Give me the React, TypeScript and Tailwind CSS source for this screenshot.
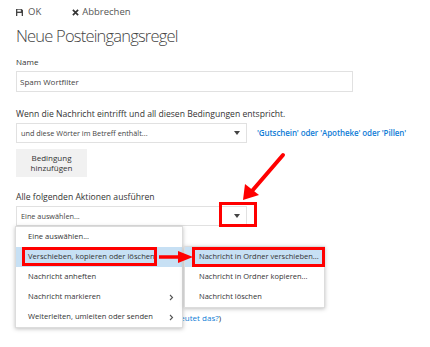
import React from 'react';

const Caret = () => (
  <svg width="6" height="4" viewBox="0 0 6 4" className="fill-[#444]">
    <path d="M0 0h6L3 4z" />
  </svg>
);

const Chevron = () => (
  <svg width="5" height="7" viewBox="0 0 5 7" className="stroke-[#555] fill-none">
    <path d="M1 1l2.5 2.5L1 6" strokeWidth="1.1" />
  </svg>
);

const menuItems = [
  { label: 'Eine auswählen...', sub: false },
  { label: 'Verschieben, kopieren oder löschen', sub: false, active: true },
  { label: 'Nachricht anheften', sub: false },
  { label: 'Nachricht markieren', sub: true },
  { label: 'Weiterleiten, umleiten oder senden', sub: true },
];

const subItems = [
  { label: 'Nachricht in Ordner verschieben...', active: true },
  { label: 'Nachricht in Ordner kopieren...' },
  { label: 'Nachricht löschen' },
];

export default function App() {
  return (
    <div className="relative w-[430px] h-[347px] overflow-hidden bg-white font-['Open_Sans',sans-serif] text-[#333]">
      <div className="pl-4">
        {/* Toolbar */}
        <div className="flex items-center h-[24px] text-[9.5px] text-[#555]">
          <span className="flex items-center gap-[5px]">
            <svg width="7" height="7" viewBox="0 0 8 8" className="fill-[#444]">
              <path d="M0 0h6.5L8 1.5V8H0z" />
              <rect x="1.5" y="0.8" width="4" height="2.2" className="fill-white" />
              <rect x="1.5" y="4.6" width="5" height="3.4" className="fill-white" />
            </svg>
            OK
          </span>
          <span className="flex items-center gap-[3px] ml-[31px]">
            <svg width="7" height="7" viewBox="0 0 8 8" className="stroke-[#333]">
              <path d="M1 1l6 6M7 1L1 7" strokeWidth="1.9" />
            </svg>
            Abbrechen
          </span>
        </div>

        {/* Title */}
        <h1 className="text-[16.5px] leading-[24px] font-light text-[#444] tracking-[-0.8px]">
          Neue Posteingangsregel
        </h1>

        {/* Name */}
        <div className="mt-[9px] text-[8px] leading-[10px] text-[#333]">Name</div>
        <div className="mt-[4px] w-[337px] h-[21px] border border-[#e1e1e1] flex items-center pl-[3px] text-[8px] text-[#444]">
          Spam Wortfilter
        </div>

        {/* Conditions */}
        <div className="mt-[16px] text-[8.6px] leading-[12px] text-[#333]">
          Wenn die Nachricht eintrifft und all diesen Bedingungen entspricht.
        </div>
        <div className="mt-[3px] flex items-center">
          <div className="w-[231px] h-[20px] border border-[#e1e1e1] flex items-center justify-between pl-[4px] pr-[6px] text-[7.3px] text-[#444]">
            <span>und diese Wörter im Betreff enthält...</span>
            <Caret />
          </div>
          <span className="ml-[10px] text-[8px] font-semibold text-[#0f7cd6] tracking-[-0.1px]">
            'Gutschein' oder 'Apotheke' oder 'Pillen'
          </span>
        </div>
        <div className="mt-[6px] w-[71px] h-[28px] bg-[#f1f1f1] flex flex-col items-center justify-center text-[8px] leading-[10px] text-[#333]">
          <span>Bedingung</span>
          <span>hinzufügen</span>
        </div>

        {/* Actions */}
        <div className="mt-[14px] text-[8.6px] leading-[12px] text-[#333]">
          Alle folgenden Aktionen ausführen
        </div>
        <div className="mt-[3px] w-[231px] h-[20px] border border-[#e1e1e1] flex items-center justify-between pl-[4px] pr-[6px] text-[7.3px] text-[#444]">
          <span>Eine auswählen...</span>
          <Caret />
        </div>

        {/* Row partly hidden behind the menu */}
        <div className="mt-[86px] w-[205px] flex justify-end whitespace-nowrap text-[8px] leading-[12px] text-[#333]">
          <span>
            Keine weiteren Regeln verarbeiten <span className="text-[#0f7cd6]">(Was bedeutet das?</span>)
          </span>
        </div>
      </div>

      {/* Dropdown menu */}
      <div className="absolute left-[15px] top-[226px] w-[168px] bg-white border border-[#dcdcdc] shadow-[0_1px_4px_rgba(0,0,0,0.25)] text-[7.6px] text-[#333]">
        {menuItems.map((it) => (
          <div
            key={it.label}
            className={`h-[20px] flex items-center justify-between whitespace-nowrap pl-[12px] pr-[8px] ${it.active ? 'bg-[#c7e0f4]' : ''}`}
          >
            <span>{it.label}</span>
            {it.sub && <Chevron />}
          </div>
        ))}
      </div>

      {/* Submenu */}
      <div className="absolute left-[184px] top-[246px] w-[141px] bg-white border border-[#dcdcdc] shadow-[0_1px_4px_rgba(0,0,0,0.25)] text-[7.5px] text-[#333]">
        {subItems.map((it) => (
          <div
            key={it.label}
            className={`h-[20px] flex items-center whitespace-nowrap pl-[14px] ${it.active ? 'bg-[#c7e0f4]' : ''}`}
          >
            {it.label}
          </div>
        ))}
      </div>

      {/* Red annotation boxes */}
      <div className="absolute left-[219px] top-[202px] w-[38px] h-[25px] border-[3px] border-[#ff0000]" />
      <div className="absolute left-[22px] top-[247px] w-[135px] h-[19px] border-[3px] border-[#ff0000]" />
      <div className="absolute left-[192px] top-[247px] w-[133px] h-[20px] border-[3px] border-[#ff0000]" />

      {/* Red arrows */}
      <svg className="absolute left-0 top-0" width="430" height="347" viewBox="0 0 430 347">
        <path d="M283 155L252 191" stroke="#ff0000" strokeWidth="4" strokeLinecap="round" />
        <path d="M243 200L245 184L259 195z" fill="#ff0000" />
        <path d="M159 257H180" stroke="#ff0000" strokeWidth="3.5" />
        <path d="M193 257L178 251V263z" fill="#ff0000" />
      </svg>
    </div>
  );
}
